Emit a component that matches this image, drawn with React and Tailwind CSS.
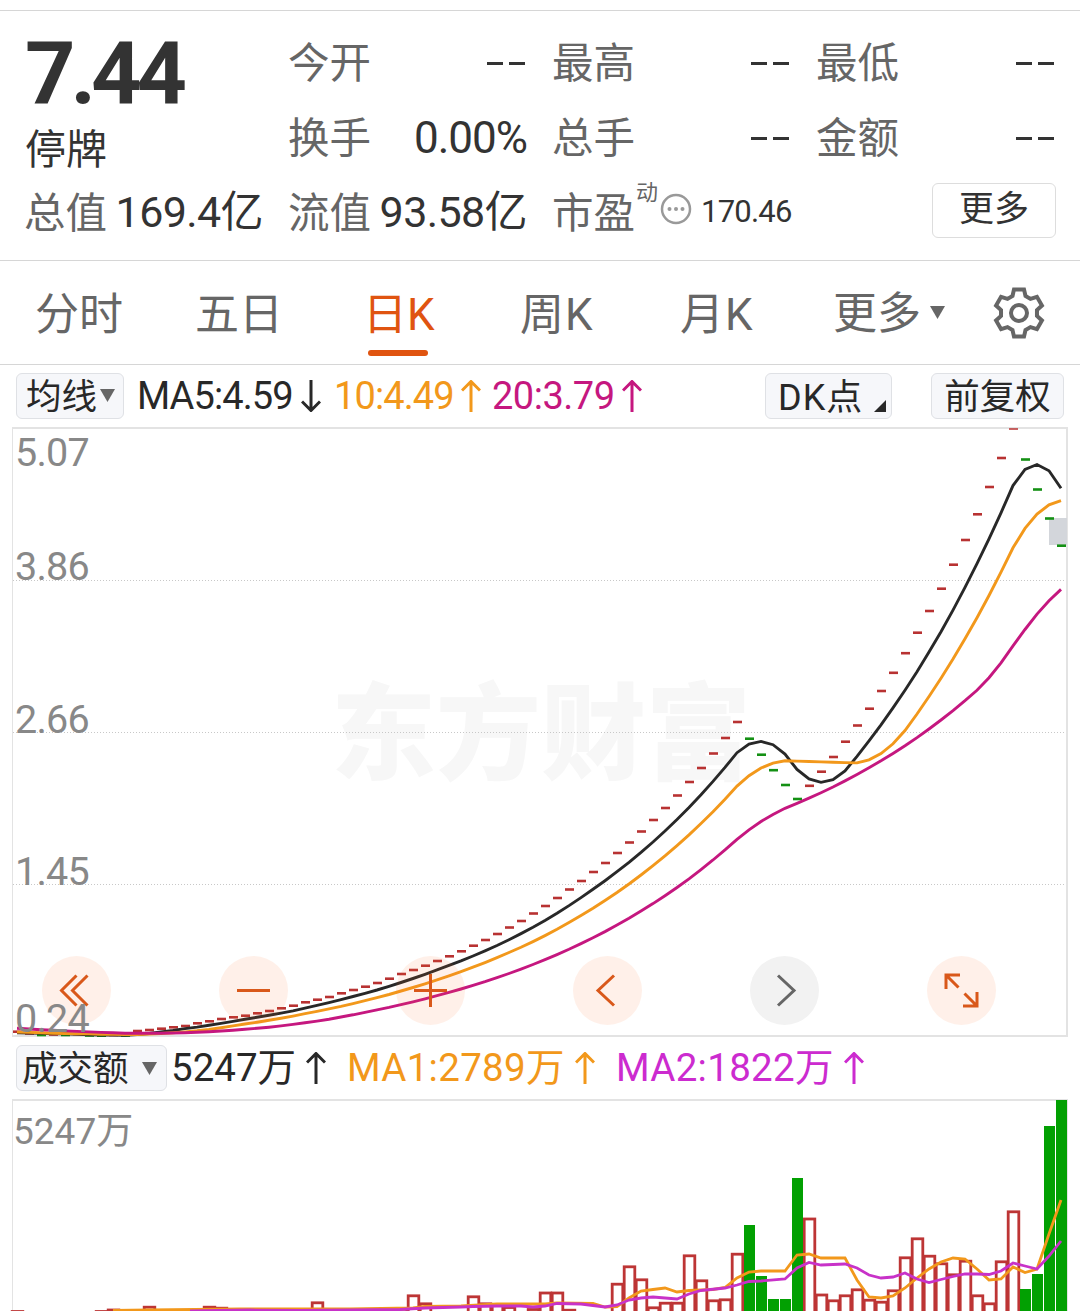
import React from "react";

const FONT = "font-['Roboto','Noto_Sans_CJK_SC',sans-serif]";

/* ---------- data ---------- */
const STEP = 12;
const FIRST_X = 17;

// vertical position of every close, oldest first
const HISTORY = [1020, 1021, 1022, 1023, 1024, 1025, 1026, 1027, 1028, 1029, 1030, 1031, 1031, 1032, 1032, 1033, 1033, 1033, 1034];
const CLOSES = [
  1031.7, 1033.5, 1035, 1034.5, 1035, 1034, 1035.5, 1035.8, 1035, 1035.5,
  1031, 1030, 1028.7, 1027.3, 1026, 1023.3, 1021.3, 1019, 1017.3, 1015.7,
  1013.3, 1011, 1008.3, 1005.7, 1002.3, 999.7, 997, 993.3, 990, 986.7,
  983, 978.7, 974, 970, 965.7, 961, 956.3, 951.3, 945.7, 940,
  934, 927.5, 921, 913.5, 906, 898, 889.5, 881, 872, 863,
  853, 842.5, 831.5, 820, 808, 795.5, 782, 768, 753.5, 738,
  722, 738.7, 754.7, 770.2, 785, 799, 785.8, 771.7, 757, 741.7,
  725.5, 708.7, 691, 672.8, 653.2, 632.7, 611, 588.7, 564.7, 540,
  514.3, 487, 458, 428.5, 459.5, 489.5, 518.5, 545.7,
];
const FALLING = new Set([2, 4, 6, 7, 9, 61, 62, 63, 64, 65, 84, 85, 86, 87]);

function average(n) {
  const all = [...HISTORY, ...CLOSES];
  return CLOSES.map((_, i) => {
    const end = i + HISTORY.length + 1;
    const part = all.slice(end - n, end);
    const y = part.reduce((a, b) => a + b, 0) / n;
    return `${FIRST_X + i * STEP},${y.toFixed(1)}`;
  }).join(" ");
}

const RED_BARS = [
  [17, 1310], [101, 1310], [113, 1308.5], [149, 1305.7], [209, 1305.7], [221, 1306.7], [305, 1308], [317, 1301.3],
  [401, 1307.7], [413, 1294.3], [425, 1302.3], [473, 1295.3], [485, 1302.3], [497, 1304], [509, 1306], [533, 1308],
  [545, 1291.5], [557, 1291.5], [569, 1308.7], [617, 1282.7], [629, 1265.3], [641, 1278.3], [653, 1306.3],
  [665, 1301.7], [677, 1301.7], [689, 1254.3], [701, 1279.3], [713, 1299.3], [725, 1298.3], [737, 1252.7],
  [809, 1217.5], [821, 1293.5], [833, 1299.3], [845, 1294.3], [857, 1288.3], [869, 1298.7], [881, 1300.7],
  [893, 1289.3], [905, 1256.3], [917, 1237.3], [929, 1254.7], [941, 1262.3], [953, 1273.3], [965, 1259.7],
  [977, 1294.3], [989, 1302.3], [1001, 1260.3], [1013, 1210.3],
];
const GREEN_BARS = [
  [749, 1225], [761, 1276], [773, 1299], [785, 1299], [797, 1178], [1025, 1289], [1037, 1274], [1049, 1126], [1061, 1100],
];
const VOL_MA1 =
  "113,1310.5 150,1310 240,1309 350,1309 413,1308 425,1306.5 461,1306 497,1304 545,1304 557,1303 593,1303.5 605,1307 617,1306.5 629,1298 641,1291 653,1289.5 665,1288 677,1292 689,1290.5 713,1289.5 725,1287.5 737,1278 749,1272 761,1271 785,1271 797,1255 809,1254 821,1258 845,1258 857,1280 869,1297 881,1298 893,1296 905,1288 917,1278 929,1269 941,1262 953,1258 965,1259 977,1269 989,1280 1001,1279 1013,1267 1025,1272.5 1037,1269 1049,1234 1061,1200";
const VOL_MA2 =
  "190,1311 250,1310 300,1310.5 400,1309.5 425,1308 461,1307 473,1306.5 497,1306 521,1306 533,1307 545,1306 557,1303.5 581,1304 593,1305.5 605,1307 617,1305 629,1300 641,1298 653,1297 677,1299 689,1294 701,1290.5 725,1288 737,1285 749,1281.5 761,1281 785,1279 797,1268 809,1262.5 821,1265 845,1264 857,1268 869,1275 881,1278 893,1277 905,1273 917,1279 929,1282.5 941,1279.5 953,1276.5 965,1274 977,1274 989,1274.5 1001,1271 1013,1263 1025,1266 1037,1269 1049,1256 1061,1241";

/* ---------- icons ---------- */
function Arrow({ down, className }) {
  return (
    <svg width="20" height="32" viewBox="0 0 20 32" className={`shrink-0 ${className}`}>
      <path
        d={down ? "M10 0V30M1 21.5L10 30.5L19 21.5" : "M10 32V2M1 10.5L10 1.5L19 10.5"}
        fill="none" stroke="currentColor" strokeWidth="3"
      />
    </svg>
  );
}

function Triangle({ className }) {
  return (
    <svg width="15" height="13" viewBox="0 0 15 13" className={`shrink-0 ${className}`}>
      <path d="M0 0H15L7.5 13Z" fill="#666" />
    </svg>
  );
}

const TOOTH = [[-6.5, -17], [-5, -23.6], [5, -23.6], [6.5, -17]];
const GEAR = Array.from({ length: 6 }, (_, k) => {
  const a = (k * Math.PI) / 3;
  return TOOTH.map(([x, y]) => `${(x * Math.cos(a) - y * Math.sin(a)).toFixed(2)},${(x * Math.sin(a) + y * Math.cos(a)).toFixed(2)}`).join(" ");
}).join(" ");

function Gear() {
  return (
    <svg width="52" height="52" viewBox="-26 -26 52 52" fill="none" stroke="#666" strokeWidth="4">
      <polygon points={GEAR} />
      <circle r="8" />
    </svg>
  );
}

/* ---------- quote ---------- */
function Label({ children }) {
  return <span className="-ml-px pt-[5px] text-[41.5px] text-[#666]">{children}</span>;
}

function Dashes() {
  return (
    <span className="mr-[2px] mt-[4px] flex gap-[6px]" aria-label="--">
      <i className="h-[3px] w-[16px] bg-[#333]" />
      <i className="h-[3px] w-[16px] bg-[#333]" />
    </span>
  );
}

function Cell({ label, children }) {
  return (
    <div className="flex items-center justify-between whitespace-nowrap">
      <Label>{label}</Label>
      {children}
    </div>
  );
}

function Quote() {
  return (
    <section className="mt-[10px] h-[251px] border-y border-[#d6d6d6] pl-[25px] pr-[23px] pt-[13px] text-[#333]">
      <div className="grid grid-cols-[238px_238px_238px_239px] grid-rows-[75px_75px_75px] gap-x-[26px]">
        <div className="row-span-2 flex flex-col">
          <div className="mt-[12px] h-[75px] text-[88px] font-bold leading-[75px] tracking-[-5px]">7.44</div>
          <div className="mt-[12px] text-[41px] leading-[54px]">停牌</div>
        </div>
        <Cell label="今开"><Dashes /></Cell>
        <Cell label="最高"><Dashes /></Cell>
        <Cell label="最低"><Dashes /></Cell>
        <Cell label="换手"><span className="pt-[2px] text-[44px] tracking-[-1px]">0.00%</span></Cell>
        <Cell label="总手"><Dashes /></Cell>
        <Cell label="金额"><Dashes /></Cell>
        <Cell label="总值"><span className="pt-[2px] text-[43px] tracking-[-0.6px]">169.4亿</span></Cell>
        <Cell label="流值"><span className="pt-[2px] text-[43px] tracking-[-0.6px]">93.58亿</span></Cell>
        <div className="col-span-2 flex items-center whitespace-nowrap">
          <Label>市盈</Label>
          <span className="mb-[38px] ml-px text-[22px] leading-none text-[#666]">动</span>
          <svg width="32" height="32" viewBox="0 0 32 32" className="mb-1.5 ml-0.5">
            <circle cx="16" cy="16" r="14" fill="none" stroke="#999" strokeWidth="2.5" />
            <circle cx="9.5" cy="16" r="2" fill="#999" />
            <circle cx="16" cy="16" r="2" fill="#999" />
            <circle cx="22.5" cy="16" r="2" fill="#999" />
          </svg>
          <span className="ml-[9px] pt-px text-[31px] tracking-[-0.8px]">170.46</span>
          <button className="mb-[3px] ml-auto h-[55px] w-[124px] rounded-md border border-[#ddd] pb-px text-[35px] leading-none">更多</button>
        </div>
      </div>
    </section>
  );
}

/* ---------- tabs ---------- */
function Tabs() {
  return (
    <nav className="flex h-[104px] items-center border-b border-[#d6d6d6] pl-[35px] text-[44px] leading-[60px] text-[#666]">
      <div className="w-[160px] pt-1">分时</div>
      <div className="w-[168px] pt-1">五日</div>
      <div className="relative w-[157px] pt-1 text-[#e05410]">
        日K
        <span className="absolute left-[5px] top-[69px] h-1.5 w-[60px] rounded-full bg-[#e05410]" />
      </div>
      <div className="w-[160px] pt-1 tracking-[1px]">周K</div>
      <div className="w-[153px] pt-1 tracking-[1px]">月K</div>
      <div className="flex w-[160px] items-center gap-[9px] pt-[3px]">更多<Triangle className="-mt-1" /></div>
      <Gear />
    </nav>
  );
}

/* ---------- price chart ---------- */
const CHIP = "flex h-[46px] shrink-0 items-center rounded-md border border-[#dfe1e5] bg-[#f6f7fa] leading-none text-[#282828]";

function MaBar() {
  return (
    <div className="flex h-[62px] items-center whitespace-nowrap pl-4 pr-4 text-[38px] leading-none text-[#282828]">
      <div className={`${CHIP} w-[108px] gap-[3px] pl-[9px] text-[35.5px]`}><span className="pt-[3px]">均线</span><Triangle className="-mt-px" /></div>
      <span className="ml-[13px] w-[155px] tracking-[-0.9px]">MA5:4.59</span>
      <Arrow down className="ml-[9px]" />
      <span className="ml-[13px] w-[120px] tracking-[-0.9px] text-[#f2981b]">10:4.49</span>
      <Arrow className="ml-[7px] text-[#f2981b]" />
      <span className="ml-[11px] w-[120px] tracking-[-0.5px] text-[#c5177f]">20:3.79</span>
      <Arrow className="ml-[10px] text-[#c5177f]" />
      <div className={`${CHIP} ml-auto w-[127px] justify-between pl-3 pr-[5px] text-[36px]`}>
        <span className="pt-[3px] tracking-[1px]">DK点</span>
        <svg width="12" height="12" viewBox="0 0 12 12" className="mt-5"><path d="M12 0V12H0Z" fill="#282828" /></svg>
      </div>
      <div className={`${CHIP} ml-[39px] w-[133px] justify-center text-[35.5px]`}><span className="pt-[3px]">前复权</span></div>
    </div>
  );
}

function RoundButton({ muted, children }) {
  return (
    <button className={muted ? "size-[69px] rounded-full bg-[#f2f2f2]" : "size-[69px] rounded-full bg-[#ff6a20]/10"}>
      <svg width="69" height="69" viewBox="-34.5 -34.5 69 69" fill="none" stroke={muted ? "#666" : "#d9581a"} strokeWidth="3">
        {children}
      </svg>
    </button>
  );
}

const AXIS = "absolute left-[15px] text-[39.5px] leading-[40px] tracking-[-0.8px] text-[#888]";

function PriceChart() {
  return (
    <div className="relative h-[610px]">
      <svg width="1080" height="610" viewBox="0 427 1080 610" className="block" fill="none">
        <text x="331" y="771" fontSize="105" fontWeight="900" fill="#f7f7f7" fontFamily="Noto Sans CJK SC" textLength="420">东方财富</text>
        <path d="M12.5 428V1036" stroke="#e3e3e3" />
        <path d="M12 428H1067V1036H12" stroke="#e3e3e3" strokeWidth="2" />
        <path d="M13 580.5H1066M13 732.5H1066M13 884.5H1066" stroke="#c8c8c8" strokeDasharray="1 2" />
        <rect x="1049" y="518" width="18" height="27" fill="#d3d6db" />
        {CLOSES.map((y, i) => {
          const x = FIRST_X + i * STEP;
          return <path key={i} d={`M${x - 4} ${Math.max(y, 429)}h9`} stroke={FALLING.has(i) ? "#149014" : "#b83232"} strokeWidth={i === 83 ? 1.5 : 2.6} />;
        })}
        <polyline points={average(5)} stroke="#282828" strokeWidth="2.9" />
        <polyline points={average(10)} stroke="#f2981b" strokeWidth="2.9" />
        <polyline points={average(20)} stroke="#c5177f" strokeWidth="2.9" />
      </svg>
      <div className="absolute left-[42px] top-[529px] flex gap-[108px]">
        <RoundButton><path d="M0 -15L-15 0L0 15M11 -15L-4 0L11 15" /></RoundButton>
        <RoundButton><path d="M-16.5 0H16.5" /></RoundButton>
        <RoundButton><path d="M-16.5 0H16.5M0 -16.5V16.5" /></RoundButton>
        <RoundButton><path d="M6.5 -15L-9.5 0L6.5 15" /></RoundButton>
        <RoundButton muted><path d="M-6.5 -15L9.5 0L-6.5 15" /></RoundButton>
        <RoundButton><path d="M-1.5 -15.5H-15.5V-1.5M-15.5 -15.5L-3 -3M1.5 15.5H15.5V1.5M15.5 15.5L3 3" /></RoundButton>
      </div>
      <span className={`${AXIS} top-[6px]`}>5.07</span>
      <span className={`${AXIS} top-[120px]`}>3.86</span>
      <span className={`${AXIS} top-[273px]`}>2.66</span>
      <span className={`${AXIS} top-[425px]`}>1.45</span>
      <span className={`${AXIS} top-[572px]`}>0.24</span>
    </div>
  );
}

/* ---------- turnover chart ---------- */
function VolumeBar() {
  return (
    <div className="flex h-[62px] items-center whitespace-nowrap pl-4 text-[38.5px] leading-none text-[#282828]">
      <div className={`${CHIP} w-[151px] gap-[13px] pl-[5px] text-[35.5px]`}><span className="pt-[3px]">成交额</span><Triangle /></div>
      <span className="ml-[4px] w-[123px]">5247万</span>
      <Arrow className="ml-[12px]" />
      <span className="ml-[21px] w-[218px] tracking-[0.3px] text-[#f2981b]">MA1:2789万</span>
      <Arrow className="ml-[10px] text-[#f2981b]" />
      <span className="ml-[21px] w-[217px] tracking-[0.3px] text-[#cc2bcf]">MA2:1822万</span>
      <Arrow className="ml-[11px] text-[#cc2bcf]" />
    </div>
  );
}

function VolumeChart() {
  return (
    <div className="relative h-[212px]">
      <svg width="1080" height="212" viewBox="0 1099 1080 212" className="block" fill="none">
        <path d="M12.5 1100V1311" stroke="#e3e3e3" />
        <path d="M12 1100H1067V1311" stroke="#e3e3e3" strokeWidth="2" />
        {RED_BARS.map(([x, y]) => (
          <rect key={x} x={x - 4.8} y={y + 1.5} width="10.6" height="130" fill="#fff" stroke="#bd3535" strokeWidth="2.8" />
        ))}
        {GREEN_BARS.map(([x, y]) => (
          <rect key={x} x={x - 5} y={y} width="11" height="240" fill="#02a002" />
        ))}
        <polyline points={VOL_MA1} stroke="#f2981b" strokeWidth="2.8" />
        <polyline points={VOL_MA2} stroke="#c832c8" strokeWidth="2.8" />
      </svg>
      <span className="absolute left-[13px] top-[13px] text-[37px] leading-[40px] text-[#888]">5247万</span>
    </div>
  );
}

export default function App() {
  return (
    <main className={`flex h-[1311px] w-[1080px] flex-col overflow-hidden bg-white ${FONT}`}>
      <Quote />
      <Tabs />
      <MaBar />
      <PriceChart />
      <VolumeBar />
      <VolumeChart />
    </main>
  );
}
